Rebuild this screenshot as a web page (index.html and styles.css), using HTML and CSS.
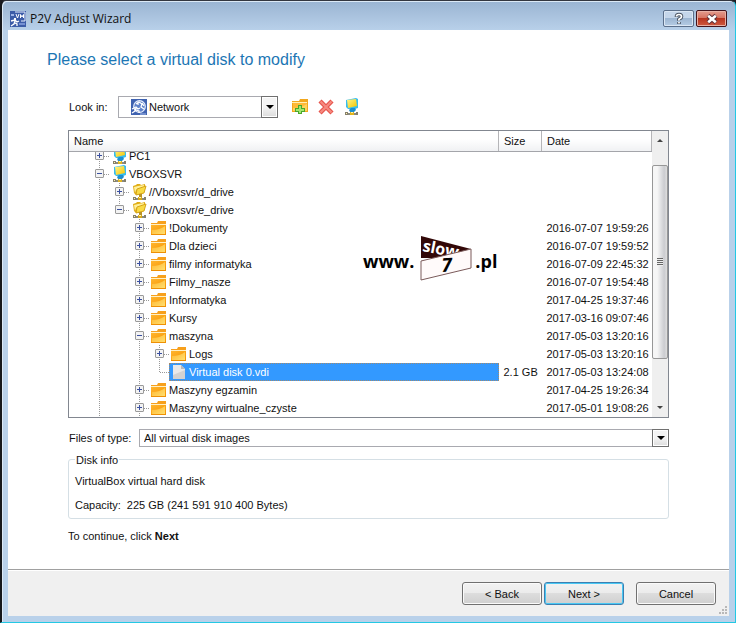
FILE: index.html
```html
<!DOCTYPE html>
<html lang="en">
<head>
<meta charset="utf-8">
<title>P2V Adjust Wizard</title>
<link rel="stylesheet" href="styles.css">
</head>
<body>
<svg class="defs" aria-hidden="true">
  <defs>
    <linearGradient id="gold" x1="0" y1="0" x2="1" y2="1">
      <stop offset="0" stop-color="#ffb52e"/><stop offset="1" stop-color="#f79400"/>
    </linearGradient>
    <linearGradient id="gold-light" x1="0" y1="0" x2="1" y2="1">
      <stop offset="0" stop-color="#ffb52e"/><stop offset="1" stop-color="#ffdf70"/>
    </linearGradient>
    <linearGradient id="screen" x1="0" y1="0" x2="1" y2="1">
      <stop offset="0" stop-color="#fff68a"/><stop offset="1" stop-color="#f4c400"/>
    </linearGradient>
    <symbol id="folder" viewBox="0 0 16 16">
      <path d="M0 3h6l1-2h8v14H0z" fill="#f7a01c"/>
      <path d="M0 4h15v1H0z" fill="#fff0c4"/>
      <path d="M0 5h15v9H0z" fill="url(#gold)"/>
      <path d="M1 14V10q8 0 13-4v8z" fill="url(#gold-light)"/>
      <path d="M0 14h15v1H0z" fill="#ee9005"/>
    </symbol>
    <symbol id="computer" viewBox="0 0 16 18">
      <path d="M2 2l10-2 2 1v9l-3 1H4L2 9z" fill="#36bdf0"/>
      <path d="M3 2l9-1 1 7-9 2z" fill="url(#screen)"/>
      <path d="M7 10h4l1 2-2 2H6l-1-2z" fill="#1c8fd0"/>
      <path d="M1 15h13v2H1z" fill="#8a8a80"/>
      <path d="M6 14h4v3H6z" fill="#e2b51f"/>
      <path d="M1 14h3v3H1zM12 14h2v3h-2z" fill="#85806c"/>
      <path d="M2 15h1v1H2zM7 14h2v1H7z" fill="#fff3b0"/>
    </symbol>
    <symbol id="share" viewBox="0 0 16 18">
      <path d="M1 3l3-1 1-1h3l1 1 4-1v4l-2 5-7 2-2-2z" fill="#e0ac14"/>
      <path d="M2 4l4-1 6-1v3L4 7l-1 3z" fill="#fff09a"/>
      <path d="M5 6l9-3-2 7-8 2z" fill="#f9db45" stroke="#d6a418"/>
      <path d="M7 11h3v4H7z" fill="#b99228"/>
      <path d="M1 15h13v2H1z" fill="#8a8a80"/>
      <path d="M6 14h4v3H6z" fill="#d9a918"/>
      <path d="M1 14h3v3H1zM12 14h2v3h-2z" fill="#85806c"/>
      <path d="M2 15h1v1H2zM7 14h2v1H7z" fill="#fff3b0"/>
    </symbol>
    <symbol id="file" viewBox="0 0 16 16">
      <path d="M2 1h8l4 4v10H2z" fill="#e9e9e9"/>
      <path d="M2 15V11l12-5v9z" fill="#d2d2d2"/>
      <path d="M10 1v4h4z" fill="#b9b9b9"/>
    </symbol>
  </defs>
</svg>

<div class="window">
  <header class="titlebar">
    <svg class="app-icon" viewBox="0 0 16 16" aria-hidden="true">
      <path d="M0 0h16v16H0z" fill="#3c5ca8"/>
      <path d="M5 1h10v9h-4" fill="none" stroke="#e8eefc"/>
      <path d="M6 3l1.500 4L9 3M10.500 7V3.500L12 6l1.500-2.500V7" fill="none" stroke="#fff"/>
      <path d="M1 3h3v2H1z" fill="#9fb4e6"/>
      <path d="M4 7h2v2H4z" fill="#fff"/>
      <path d="M1 10l4-1 2 2 2-1M5 10l-1 3-3 2M5 12l2 1v2" fill="none" stroke="#fff" stroke-width="1.300"/>
      <path d="M9 12h6v2H9z" fill="#7590d2"/>
    </svg>
    <h1>P2V Adjust Wizard</h1>
    <button class="caption" type="button" aria-label="Help">
      <svg viewBox="0 0 12 14" aria-hidden="true"><path d="M3.500 5V4.500q0-2 2.500-2T8.500 4.500Q8.500 6 7 6.500T6 8.500M6 10v2" fill="none" stroke="#4c5664" stroke-width="3.600"/><path d="M3.500 4.500q0-2 2.500-2T8.500 4.500Q8.500 6 7 6.500T6 8.500M6 10v1.500" fill="none" stroke="#fff" stroke-width="1.700"/></svg>
    </button>
    <button class="caption close" type="button" aria-label="Close">
      <svg viewBox="0 0 12 14" aria-hidden="true"><path d="M2 3.500l8 7M10 3.500l-8 7" stroke="#5b3038" stroke-width="4.400"/><path d="M2.200 3.700l7.600 6.600M9.800 3.700l-7.600 6.600" stroke="#fff" stroke-width="2.600"/></svg>
    </button>
  </header>

  <main class="page">
    <h2>Please select a virtual disk to modify</h2>

    <div class="content">
      <div class="toolbar">
        <label for="look-in">Look in:</label>
        <div class="combo look-in">
          <select id="look-in"><option>Network</option></select>
          <svg class="combo-icon" viewBox="0 0 16 16" aria-hidden="true">
            <path d="M0 0h16v16H0z" fill="#3f62b0"/>
            <circle cx="8.500" cy="7.500" r="5.800" fill="#5f82ca" stroke="#e8effd" stroke-width="1.200"/>
            <path d="M5 5l3-2 3 2-1 3 3 2M7 3v3M1 10l4-2 2 2 2-1M5 9l-1 3-3 2M5 11l3 1v2M11 4l2 3" fill="none" stroke="#fff" stroke-width="1.300"/>
            <path d="M9 15h6" stroke="#a9bdea"/>
          </svg>
          <span class="combo-arrow"></span>
        </div>
        <button class="tool" type="button" aria-label="New folder">
          <svg viewBox="0 0 16 16" aria-hidden="true">
            <path d="M0 2h7l1-2h8v13H0z" fill="#f2a71d"/><path d="M1 4h14v8H1z" fill="#ffb938"/><path d="M0 3h15v1H0z" fill="#fff0b8"/><path d="M1 12V9q8 0 14-4v7z" fill="#ffd35c"/>
            <path d="M6 6h4v3h3v4h-3v2H6v-2H3V9h3z" fill="#4aa82c"/><path d="M7 7h2v3h3v2H9v2H7v-2H4v-2h3z" fill="#a2e66e"/>
          </svg>
        </button>
        <button class="tool" type="button" aria-label="Delete">
          <svg viewBox="0 0 16 16" aria-hidden="true"><path d="M2 2l12 12M14 2L2 14" stroke="#e6534a" stroke-width="4.400"/><path d="M2.500 2.500l11 11M13.500 2.500l-11 11" stroke="#f68a80" stroke-width="2.200"/></svg>
        </button>
        <button class="tool" type="button" aria-label="Connect to computer"><svg aria-hidden="true"><use href="#computer"/></svg></button>
      </div>

      <div class="list">
        <table>
          <colgroup><col><col class="col-size"><col class="col-date"></colgroup>
          <thead><tr><th>Name</th><th>Size</th><th>Date</th></tr></thead>
          <tbody>
            <tr class="cut"><td><div class="node"><i class="twig"><button class="plus" type="button" aria-label="Expand"></button></i><svg class="net"><use href="#computer"/></svg><span>PC1</span></div></td><td></td><td></td></tr>
            <tr><td><div class="node"><i class="twig"><button type="button" aria-label="Collapse"></button></i><svg class="net"><use href="#computer"/></svg><span>VBOXSVR</span></div></td><td></td><td></td></tr>
            <tr><td><div class="node"><i class="line"></i><i class="twig"><button class="plus" type="button" aria-label="Expand"></button></i><svg class="net"><use href="#share"/></svg><span>//Vboxsvr/d_drive</span></div></td><td></td><td></td></tr>
            <tr><td><div class="node"><i class="line"></i><i class="twig last"><button type="button" aria-label="Collapse"></button></i><svg class="net"><use href="#share"/></svg><span>//Vboxsvr/e_drive</span></div></td><td></td><td></td></tr>
            <tr><td><div class="node"><i class="line"></i><i></i><i class="twig"><button class="plus" type="button" aria-label="Expand"></button></i><svg><use href="#folder"/></svg><span>!Dokumenty</span></div></td><td></td><td>2016-07-07 19:59:26</td></tr>
            <tr><td><div class="node"><i class="line"></i><i></i><i class="twig"><button class="plus" type="button" aria-label="Expand"></button></i><svg><use href="#folder"/></svg><span>Dla dzieci</span></div></td><td></td><td>2016-07-07 19:59:52</td></tr>
            <tr><td><div class="node"><i class="line"></i><i></i><i class="twig"><button class="plus" type="button" aria-label="Expand"></button></i><svg><use href="#folder"/></svg><span>filmy informatyka</span></div></td><td></td><td>2016-07-09 22:45:32</td></tr>
            <tr><td><div class="node"><i class="line"></i><i></i><i class="twig"><button class="plus" type="button" aria-label="Expand"></button></i><svg><use href="#folder"/></svg><span>Filmy_nasze</span></div></td><td></td><td>2016-07-07 19:54:48</td></tr>
            <tr><td><div class="node"><i class="line"></i><i></i><i class="twig"><button class="plus" type="button" aria-label="Expand"></button></i><svg><use href="#folder"/></svg><span>Informatyka</span></div></td><td></td><td>2017-04-25 19:37:46</td></tr>
            <tr><td><div class="node"><i class="line"></i><i></i><i class="twig"><button class="plus" type="button" aria-label="Expand"></button></i><svg><use href="#folder"/></svg><span>Kursy</span></div></td><td></td><td>2017-03-16 09:07:46</td></tr>
            <tr><td><div class="node"><i class="line"></i><i></i><i class="twig"><button type="button" aria-label="Collapse"></button></i><svg><use href="#folder"/></svg><span>maszyna</span></div></td><td></td><td>2017-05-03 13:20:16</td></tr>
            <tr><td><div class="node"><i class="line"></i><i class="gap"></i><i class="line"></i><i class="twig"><button class="plus" type="button" aria-label="Expand"></button></i><svg><use href="#folder"/></svg><span>Logs</span></div></td><td></td><td>2017-05-03 13:20:16</td></tr>
            <tr><td><div class="node"><i class="line"></i><i class="gap"></i><i class="line"></i><i class="twig last"></i><div class="selected"><svg><use href="#file"/></svg><span>Virtual disk 0.vdi</span></div></div></td><td>2.1 GB</td><td>2017-05-03 13:24:08</td></tr>
            <tr><td><div class="node"><i class="line"></i><i></i><i class="twig"><button class="plus" type="button" aria-label="Expand"></button></i><svg><use href="#folder"/></svg><span>Maszyny egzamin</span></div></td><td></td><td>2017-04-25 19:26:34</td></tr>
            <tr><td><div class="node"><i class="line"></i><i></i><i class="twig"><button class="plus" type="button" aria-label="Expand"></button></i><svg><use href="#folder"/></svg><span>Maszyny wirtualne_czyste</span></div></td><td></td><td>2017-05-01 19:08:26</td></tr>
          </tbody>
        </table>
        <div class="scrollbar">
          <span class="arrow up"></span>
          <span class="thumb"><span class="grip"></span></span>
          <span class="arrow down"></span>
        </div>
        <div class="watermark">
          <span>www.</span>
          <svg viewBox="0 0 52 48" aria-hidden="true">
            <path d="M1 1l50 13v9L1 23z" fill="#320808"/>
            <text class="slow" x="2" y="16" transform="rotate(11 2 16)">slow</text>
            <path d="M1 26l50-12v19L1 45z" fill="#fffafa" stroke="#7a5a5a"/>
            <text class="seven" x="22" y="37" transform="rotate(-4 22 37)">7</text>
          </svg>
          <span>.pl</span>
        </div>
      </div>

      <div class="types">
        <label for="types">Files of type:</label>
        <div class="combo">
          <select id="types"><option>All virtual disk images</option></select>
          <span class="combo-arrow"></span>
        </div>
      </div>

      <fieldset>
        <legend>Disk info</legend>
        <p>VirtualBox virtual hard disk</p>
        <p class="capacity"><span>Capacity:</span><span>225 GB (241 591 910 400 Bytes)</span></p>
      </fieldset>

      <p class="hint">To continue, click <b>Next</b></p>
    </div>
  </main>

  <footer class="actions">
    <button type="button">&lt; Back</button>
    <button class="default" type="button">Next &gt;</button>
    <button class="cancel" type="button">Cancel</button>
    <svg class="size-grip" viewBox="0 0 8 8" aria-hidden="true"><path d="M6 0h2v2H6zM3 3h2v2H3zM6 3h2v2H6zM0 6h2v2H0zM3 6h2v2H3zM6 6h2v2H6z" fill="#b8b8b8"/></svg>
  </footer>
</div>
</body>
</html>
```
FILE: styles.css
```css
* { box-sizing: border-box; }

body {
  margin: 0;
  background: #1c1c22;
  color: #111;
  font: 11px/14px "Liberation Sans", Arial, sans-serif;
}

button, select { font: inherit; color: inherit; }
p, h1, h2 { margin: 0; }
.defs { position: absolute; width: 0; height: 0; }

.window {
  display: flex;
  flex-direction: column;
  min-height: 100vh;
  padding: 0 6px 6px;
  border: 1px solid #23c8e4;
  border-top-color: #33363f;
  border-left: 2px solid #16181c;
  border-radius: 6px 6px 0 0;
  background: linear-gradient(#9ab4d2, #b9d1ea 30px);
  box-shadow: inset 1px 1px #dce9f6;
}

.titlebar {
  display: flex;
  align-items: center;
  height: 29px;
  padding: 6px 2px 0;
}
.titlebar h1 {
  flex: 1;
  margin-left: 4px;
  font: 12px/16px "Open Sans", "Noto Sans", sans-serif;
}
.app-icon { width: 16px; height: 16px; }
.caption {
  display: flex;
  align-items: center;
  justify-content: center;
  width: 31px;
  height: 17px;
  margin-left: 2px;
  padding: 0;
  border: 1px solid #5b6f8a;
  border-radius: 2px;
  background: linear-gradient(#c5d6ea 50%, #9db6d2 50%, #b5cce4);
  box-shadow: inset 0 0 0 1px #dbe7f4;
}
.caption svg { width: 12px; height: 14px; }
.caption.close {
  border-color: #43141c;
  background: linear-gradient(#e49c8e, #d6715f 50%, #b83520 50%, #cf5a40);
  box-shadow: inset 0 0 0 1px #e8b0a4;
}

.page {
  flex: 1;
  padding: 20px 60px 0 39px;
  background: #fff;
}
.page h2 {
  color: #1c76b4;
  font-size: 16px;
  font-weight: 400;
  line-height: 20px;
}
.content { margin-left: 21px; }

.toolbar { display: flex; align-items: center; margin-top: 26px; }
.toolbar label { width: 50px; padding-left: 1px; }
.tool {
  display: flex;
  align-items: center;
  width: 16px;
  height: 18px;
  margin-left: 10px;
  padding: 0;
  border: 0;
  background: none;
}
.tool svg { width: 16px; height: 18px; }
.look-in + .tool { margin-left: 14px; }

.combo { display: grid; flex: 1; align-items: center; }
.combo > * { grid-area: 1 / 1; }
.combo select {
  appearance: none;
  height: 18px;
  padding: 0 20px 0 4px;
  border: 1px solid #a9aab0;
  border-radius: 0;
  background: #fff;
}
.combo-arrow {
  display: grid;
  place-items: center;
  justify-self: end;
  align-self: stretch;
  width: 17px;
  border: 1px solid #707070;
  background: linear-gradient(#f4f4f4 50%, #dcdcdc);
  box-shadow: inset 0 0 0 1px #fff;
  pointer-events: none;
}
.combo-arrow::before {
  border: 4px solid transparent;
  border-top-color: #000;
  border-bottom-width: 0;
  content: "";
}
.look-in { flex: 0 1 160px; }
.look-in select { height: 22px; padding-left: 30px; }
.combo-icon { width: 16px; height: 16px; margin-left: 13px; pointer-events: none; }

.list {
  position: relative;
  display: flex;
  margin-top: 12px;
  border: 1px solid #828790;
}
table { flex: 1; table-layout: fixed; border-collapse: collapse; width: 100%; }
.col-size { width: 43px; }
.col-date { width: 110px; }
th {
  height: 20px;
  padding: 0 5px;
  border-right: 1px solid #b5b5b8;
  border-bottom: 1px solid #a4a5aa;
  background: linear-gradient(#fff 40%, #f0f1f3);
  font-weight: 400;
  text-align: left;
}
td { height: 18px; padding: 0 0 0 5px; line-height: 18px; white-space: nowrap; }
td:first-child { padding: 0; }

.node { display: flex; align-items: center; height: 18px; padding-left: 20px; }
.node svg { flex: none; width: 16px; height: 16px; margin: 0 2px; }
.node svg.net { height: 18px; margin: 0 1px 0 3px; }
.node i { position: relative; flex: none; width: 20px; height: 18px; }
.line, .twig {
  background: repeating-linear-gradient(#999 0 1px, transparent 1px 2px) 10px 0 / 1px 100% no-repeat;
}
.twig { display: grid; place-items: center; }
.twig.last { background-size: 1px 9px; }
.twig::after {
  position: absolute;
  top: 9px;
  right: 0;
  width: 9px;
  height: 1px;
  background: repeating-linear-gradient(90deg, #999 0 1px, transparent 1px 2px);
  content: "";
}
.twig button {
  z-index: 1;
  width: 9px;
  height: 9px;
  padding: 0;
  border: 1px solid #9a9a9a;
  border-radius: 1px;
  background: linear-gradient(#3b50a0, #3b50a0) center / 5px 1px no-repeat, #f3f3f3;
}
.twig button.plus {
  background:
    linear-gradient(#3b50a0, #3b50a0) center / 5px 1px no-repeat,
    linear-gradient(#3b50a0, #3b50a0) center / 1px 5px no-repeat,
    #f3f3f3;
}

/* The list is scrolled a little, so its first row starts under the header. */
.cut td { height: 13px; line-height: 13px; }
.cut .node { align-items: flex-end; height: 13px; overflow: hidden; }
.cut .node span { margin-bottom: 4px; line-height: 9px; }

.selected {
  display: flex;
  flex: 1;
  align-items: center;
  height: 18px;
  border: 1px dotted #a08a70;
  background: #3399ff;
  color: #fff;
}
.selected svg { margin: 0 2px 0 1px; }

.scrollbar {
  display: flex;
  flex-direction: column;
  width: 16px;
  background: #efefef;
}
.arrow { display: grid; place-items: center; height: 18px; }
.arrow::before { border: 3px solid transparent; content: ""; }
.up { height: 34px; padding-bottom: 16px; }
.up::before { border-top-width: 0; border-bottom-color: #444; }
.down::before { border-bottom-width: 0; border-top-color: #444; }
.thumb {
  display: grid;
  flex: 1;
  place-items: center;
  margin-bottom: 40px;
  border: 1px solid #979797;
  border-radius: 2px;
  background: linear-gradient(90deg, #f6f6f6 30%, #cbccd0 80%, #dedede);
}
.grip {
  width: 6px;
  height: 8px;
  background: repeating-linear-gradient(#666 0 1px, #eee 1px 2px);
}

.watermark {
  position: absolute;
  top: 104px;
  left: 294px;
  display: flex;
  align-items: center;
  color: #000;
  font: 700 18px/24px "Open Sans", "Noto Sans", sans-serif;
  pointer-events: none;
}
.watermark span { padding-top: 4px; }
.watermark svg { width: 52px; height: 48px; margin: 0 3px 0 6px; }
.slow { fill: #fff; font-size: 16px; }
.seven { fill: #000; font-size: 19px; font-style: italic; }

.types { display: flex; align-items: center; margin-top: 11px; }
.types label { width: 71px; padding-left: 1px; }

fieldset {
  margin: 7px 0 0;
  padding: 8px 6px 6px;
  border: 1px solid #d5dfe5;
  border-radius: 3px;
}
legend { padding: 0 1px; line-height: 12px; }
.capacity { display: flex; gap: 6px; margin-top: 10px; }
.hint { margin-top: 10px; }

.actions {
  position: relative;
  display: flex;
  justify-content: flex-end;
  gap: 2px;
  height: 47px;
  padding: 12px 13px 11px;
  border-top: 1px solid #a0a0a0;
  background: #f0f0f0;
  box-shadow: inset 0 1px #fff;
}
.actions button {
  width: 80px;
  border: 1px solid #707070;
  border-radius: 3px;
  background: linear-gradient(#f2f2f2, #ebebeb 50%, #dddddd 50%, #cfcfcf);
  box-shadow: inset 0 0 0 1px #fafafa;
}
.actions .default { border-color: #3c7fb1; box-shadow: inset 0 0 0 1px #48c8f4; }
.actions .cancel { margin-left: 10px; }
.size-grip { position: absolute; right: 2px; bottom: 2px; width: 8px; height: 8px; }
```
